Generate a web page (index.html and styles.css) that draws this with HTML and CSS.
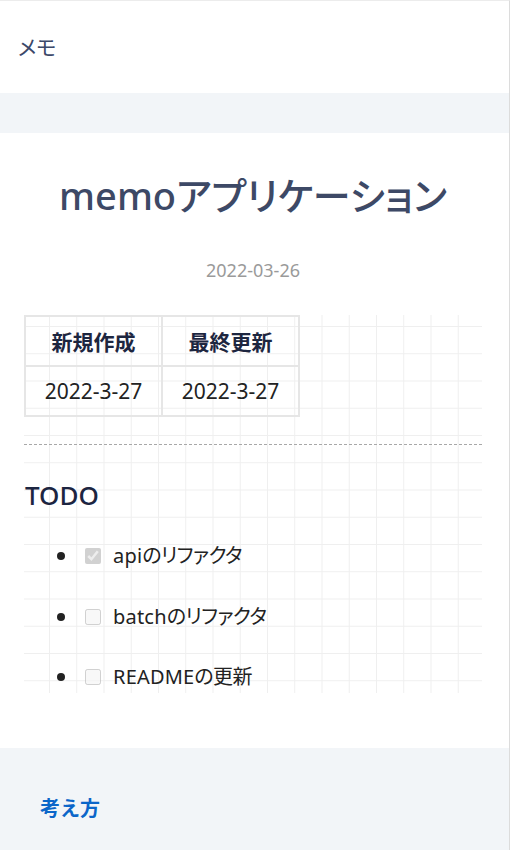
FILE: index.html
```html
<!DOCTYPE html>
<html lang="ja">
<head>
<meta charset="utf-8">
<title>memo</title>
<link rel="stylesheet" href="styles.css">
</head>
<body>
<div class="page">
  <header class="header"><span class="brand">メモ</span></header>
  <div class="band"></div>
  <main class="main">
    <h1 class="title">memoアプリケーション</h1>
    <p class="date">2022-03-26</p>
    <div class="content">
      <table class="meta">
        <thead>
          <tr><th>新規作成</th><th>最終更新</th></tr>
        </thead>
        <tbody>
          <tr><td>2022-3-27</td><td>2022-3-27</td></tr>
        </tbody>
      </table>
      <hr class="rule">
      <h2 class="section">TODO</h2>
      <ul class="todo">
        <li><input type="checkbox" checked disabled><span>api<span class="kana">のリファクタ</span></span></li>
        <li><input type="checkbox" disabled><span>batch<span class="kana">のリファクタ</span></span></li>
        <li><input type="checkbox" disabled><span>README<span class="kana">の更新</span></span></li>
      </ul>
    </div>
  </main>
  <footer class="footer"><a class="link" href="#">考え方</a></footer>
</div>
</body>
</html>
```
FILE: styles.css
```css
html, body {
  margin: 0;
  padding: 0;
  background: #ffffff;
}
body {
  font-family: "Noto Sans", "Noto Sans CJK JP", sans-serif;
}
.page {
  width: 509px;
  height: 849px;
  border-top: 1px solid #ececec;
  border-right: 1px solid #dcdcdc;
  display: flex;
  flex-direction: column;
  overflow: hidden;
}
.header {
  height: 92px;
  display: flex;
  align-items: center;
  padding-left: 18px;
  padding-bottom: 3px;
  box-sizing: border-box;
}
.brand {
  font-size: 21px;
  color: #3b4869;
  font-feature-settings: "palt";
}
.band {
  height: 40px;
  background: #f2f5f8;
}
.main {
  padding: 0 27px 55px 24px;
  background: #fff;
}
.title {
  margin: 34px 0 0;
  text-align: center;
  font-size: 38px;
  line-height: 56px;
  font-weight: 500;
  color: #3d4966;
  font-feature-settings: "palt";
}
.date {
  margin: 35px 0 0;
  text-align: center;
  font-size: 18px;
  line-height: 24px;
  color: #9a9a9a;
}
.content {
  margin-top: 33px;
  height: 378px;
  box-sizing: border-box;
  background-image:
    linear-gradient(to right, #efefef 1px, transparent 1px),
    linear-gradient(to bottom, #efefef 1px, transparent 1px);
  background-size: 27.25px 27.25px;
  background-position: 25px 11px;
}
.meta {
  border-collapse: collapse;
  border: 2px solid #e6e6e6;
}
.meta th, .meta td {
  border: 2px solid #e6e6e6;
  height: 48px;
  padding: 0;
  text-align: center;
  color: #1d2640;
}
.meta th {
  width: 135px;
  font-size: 21px;
  font-weight: 700;
}
.meta td {
  font-size: 21px;
  font-weight: 400;
  color: #222;
}
.rule {
  margin: 27px 0 0;
  border: 0;
  border-top: 1px dashed #a8a8a8;
  height: 0;
}
.section {
  margin: 34px 0 0 1px;
  font-size: 26px;
  line-height: 32px;
  font-weight: 500;
  color: #1c2541;
}
.todo {
  margin: 30px 0 0;
  padding: 0;
  list-style: none;
  color: #222;
}
.todo li {
  display: flex;
  align-items: center;
  font-size: 20px;
  line-height: 30px;
  height: 30px;
  margin-bottom: 30.5px;
}
.todo li::before {
  content: "";
  width: 8px;
  height: 8px;
  border-radius: 50%;
  background: #222;
  margin: 0 20px 0 33px;
}
.todo input {
  width: 16px;
  height: 16px;
  margin: 0 12px 0 0;
}
.todo span {
  color: #222;
  letter-spacing: 0.2px;
}
.todo .kana {
  font-feature-settings: "palt";
  letter-spacing: -0.6px;
}
.footer {
  flex: 1;
  background: #f2f5f8;
  padding: 47px 0 0 40px;
}
.link {
  font-size: 20px;
  font-weight: 700;
  color: #0b66c9;
  text-decoration: none;
  line-height: 28px;
}
```
